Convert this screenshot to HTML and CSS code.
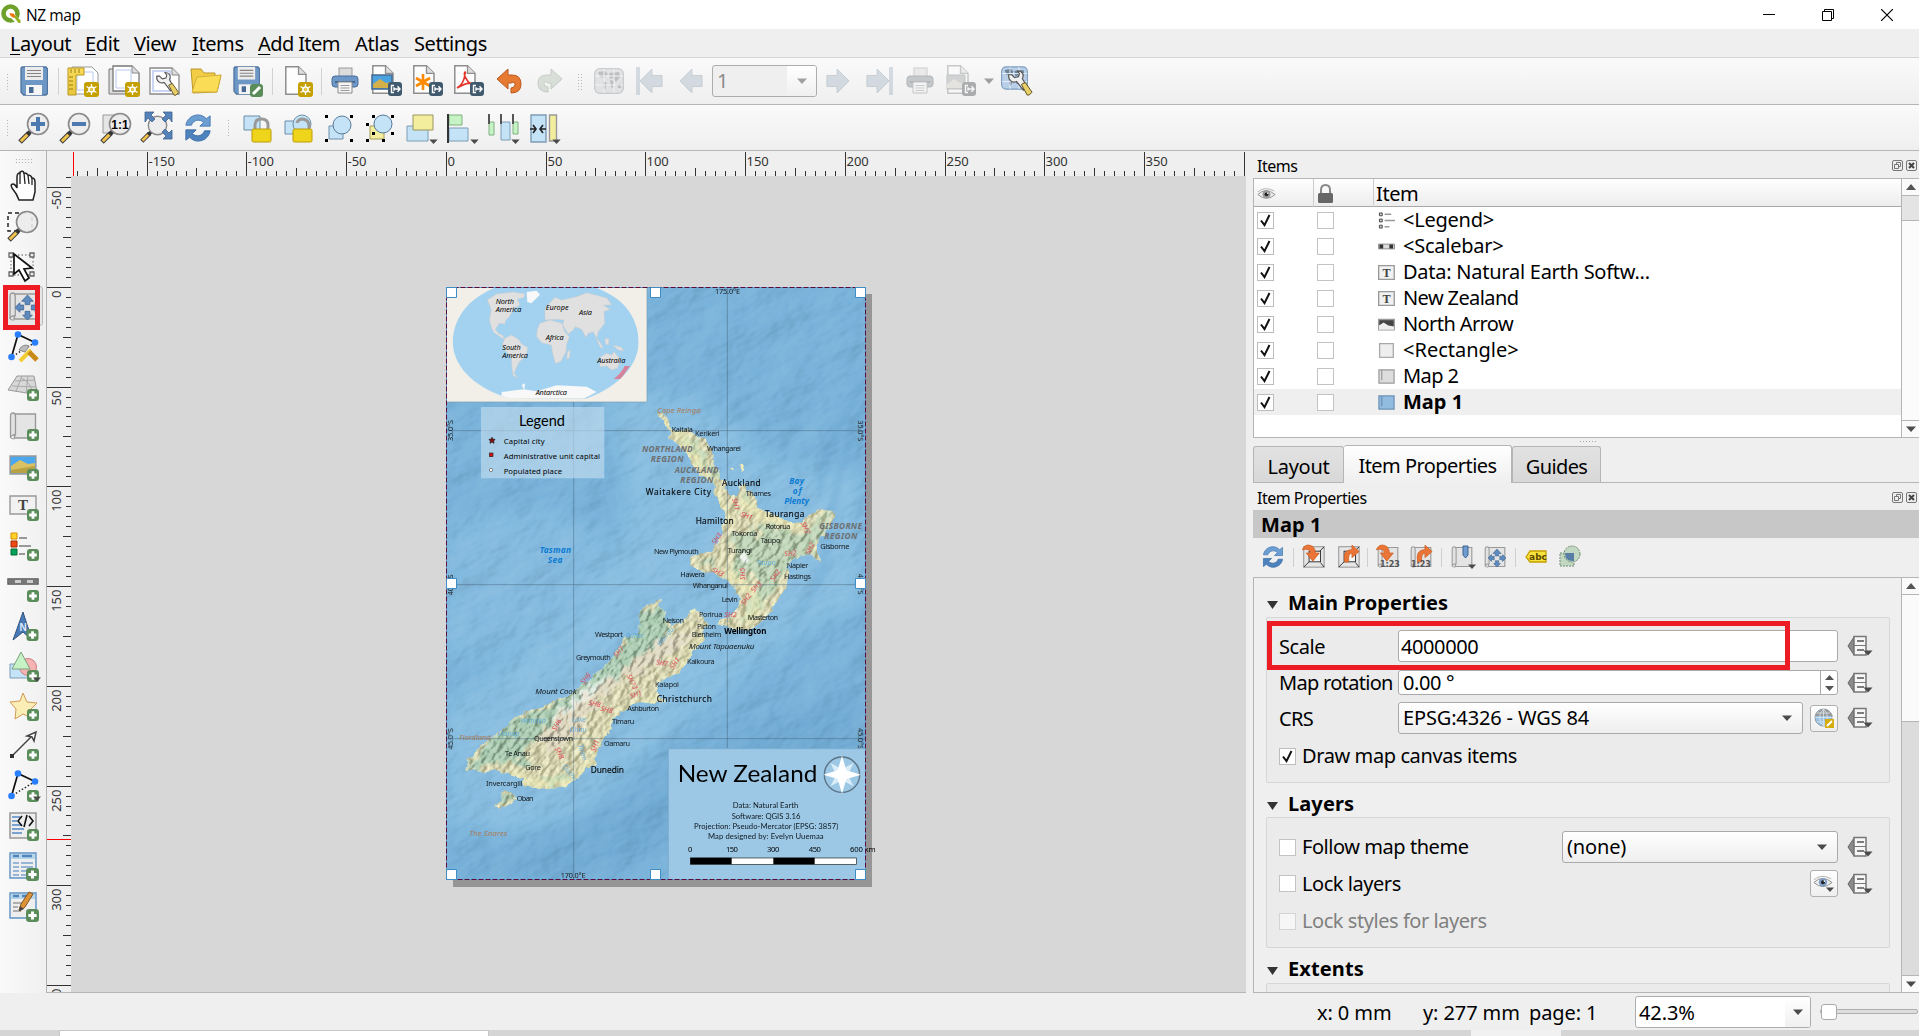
FILE: index.html
```html
<!DOCTYPE html>
<html lang="en">
<head>
<meta charset="utf-8">
<title>NZ map</title>
<link rel="stylesheet" href="styles.css">
</head>
<body>
<svg class="defs" width="0" height="0">
  <defs>
    <linearGradient id="gold" x1="0" y1="0" x2="0" y2="1"><stop offset="0" stop-color="#f9dd5c"/><stop offset="1" stop-color="#e9c53a"/></linearGradient>
    <symbol id="plus" viewBox="0 0 12 12"><rect width="12" height="12" rx="3" fill="#5a8c5a"/><path d="M6 2.200v7.600M2.200 6h7.600" stroke="#fff" stroke-width="2.800"/></symbol>
    <symbol id="new" viewBox="0 0 15 15"><rect width="15" height="15" rx="3" fill="#c4a000"/><path d="M7.500 2v11M2.500 4.500l10 6M2.500 10.500l10-6" stroke="#fff" stroke-width="1.300"/><circle cx="7.500" cy="7.500" r="3.300" fill="#fff"/><circle cx="7.500" cy="7.500" r="1.800" fill="#e2c64a"/></symbol>
    <symbol id="out" viewBox="0 0 14 14"><rect width="14" height="14" rx="3" fill="#415a6e"/><path d="M6 3.500H3.500v7H6M6 7h6M9.500 4.300L12 7 9.500 9.700M6 5.200v3.600" fill="none" stroke="#fff" stroke-width="1.400"/></symbol>
    <symbol id="drop" viewBox="0 0 10 6"><path d="M0 .5h10L5 6z" fill="#4b4b4b"/></symbol>
    <symbol id="doc" viewBox="0 0 22 29"><path d="M.8.8h12.700l7.500 7.500v19.900H.8z" fill="#fdfdfd" stroke="#8e8e8e" stroke-width="1.500"/><path d="M13.500.8v7.500H21" fill="#ddd" stroke="#8e8e8e" stroke-width="1.300"/></symbol>
    <symbol id="floppy" viewBox="0 0 28 30"><path d="M2 1h24l1.500 2v24.500L26 29H3.500L1 26V2z" fill="#6d97c4" stroke="#4f74a0" stroke-width="1.300"/><rect x="5" y="1" width="18" height="13" fill="#ececec"/><path d="M7 4.500h14M7 7.500h14M7 10.500h14" stroke="#858585" stroke-width="1.200"/><rect x="6" y="19" width="16" height="10" fill="#f5f5f5"/><rect x="9" y="21" width="4.500" height="6" fill="#466a93"/></symbol>
    <symbol id="glass" viewBox="0 0 32 32"><path d="M2 30l9-9" stroke="#3e3e3e" stroke-width="5"/><path d="M2.800 29.200l6.500-6.500" stroke="#f2c34a" stroke-width="3"/><path d="M10 22l3-3" stroke="#333" stroke-width="4"/><circle cx="20" cy="12" r="10.500" fill="#ececec" fill-opacity=".9" stroke="#8a8a8a" stroke-width="1.600"/></symbol>
    <symbol id="refresh" viewBox="0 0 30 30"><path d="M2 12C3 5 9 1 15 1c4 0 7 2 9 4l4-3v11H17l4-4c-4-4-11-3-13 3z" fill="#6c9ed2" stroke="#477ab4"/><path d="M28 18c-1 7-7 11-13 11-4 0-7-2-9-4l-4 3V17h11l-4 4c4 4 11 3 13-3z" fill="#4d82bd" stroke="#3a6da8"/></symbol>
    <symbol id="roll" viewBox="0 0 27 28"><path d="M5 2h21v24H5z" fill="#e4e4e4" stroke="#999" stroke-width="1.400"/><path d="M1 4q0-3 2.500-3T6 4v19H3.500Q1 24 1 26z" fill="#e2e2e2" stroke="#999" stroke-width="1.300"/><path d="M1 25q0 2 4 2" stroke="#999" fill="none"/></symbol>
    <symbol id="printer" viewBox="0 0 28 28"><rect x="8" y="1" width="13" height="9" fill="#dcdcdc" stroke="#999"/><rect x="1" y="9" width="26" height="11" rx="3" fill="#6d97c6" stroke="#4a6f9b"/><path d="M4 15h20" stroke="#486a91" stroke-width="2"/><path d="M7 15h14v11H7z" fill="#f6f6f6" stroke="#8a8a8a"/><path d="M9.500 18.500h9M9.500 21h9M9.500 23.500h9" stroke="#999"/></symbol>
    <symbol id="nodes" viewBox="0 0 32 32"><path d="M4.500 27L11 4.500l17 8" fill="none" stroke="#111" stroke-width="1.700"/><path d="M28 12.500L4.500 27" stroke="#222" stroke-width="1.500" stroke-dasharray="1.500 2"/><circle cx="11" cy="4.500" r="3.300" fill="#2a7fff"/><circle cx="28" cy="12.500" r="3.300" fill="#2a7fff"/><circle cx="4.500" cy="27" r="3.300" fill="#2a7fff"/></symbol>
    <symbol id="dd" viewBox="0 0 26 22"><path d="M7 2L1 11l6 9z" fill="#8b8b8b" stroke="#666"/><path d="M7 1.500h12v18.500H7z" fill="#f7f7f7" stroke="#777" stroke-width="1.500"/><path d="M10 6h7M10 15h7" stroke="#555" stroke-width="1.400"/><path d="M7 10.500h12" stroke="#777"/><path d="M16.500 15.500h9l-4.500 5z" fill="#4b4b4b"/></symbol>
    <symbol id="eye" viewBox="0 0 22 18"><path d="M1 6Q9-1 20 5" fill="none" stroke="#aaa"/><path d="M1 9Q10 0 21 9 11 18 1 9z" fill="#eee" stroke="#888"/><circle cx="11" cy="8.800" r="4.600" fill="currentColor"/><circle cx="11" cy="8.800" r="2.200" fill="#222"/><circle cx="12.500" cy="7.500" r=".9" fill="#fff"/></symbol>
    <symbol id="tick" viewBox="0 0 17 17"><rect x=".5" y=".5" width="16" height="16" fill="#fff" stroke="#bdbdbd"/><path d="M4 8.500l3.500 4.700L12.500 3" fill="none" stroke="#111" stroke-width="2"/></symbol>
    <symbol id="box" viewBox="0 0 17 17"><rect x=".5" y=".5" width="16" height="16" fill="#fff" stroke="#c3c3c3"/></symbol>
    <symbol id="float" viewBox="0 0 11 11"><rect x=".5" y=".5" width="10" height="10" rx="1.500" fill="none" stroke="#777"/><path d="M4.500 4V2.500h4v4H7M2.500 4.500h4v4h-4z" fill="none" stroke="#777"/></symbol>
    <symbol id="shut" viewBox="0 0 11 11"><rect x=".5" y=".5" width="10" height="10" rx="1.500" fill="none" stroke="#777"/><path d="M3 3l5 5M8 3L3 8" stroke="#444" stroke-width="2"/></symbol>
    <symbol id="arrow" viewBox="0 0 26 28"><path d="M1 14L14 1v7h11v12H14v7z" fill="#a9bac8" stroke="#8b9aa7"/></symbol>
    <symbol id="world" viewBox="0 0 30 26"><rect x=".7" y=".7" width="28.600" height="24.600" rx="5" fill="#b9cfe8" stroke="#7e9dbf" stroke-width="1.300"/><path d="M4 4l7-1 3 3-4 4-4-1zM9 13l4 2-2 7-2-3zM15 5l10-1 1 5-4 5-3-4-3 1zM16 12l4 1-1 7-2-1zM23 16h4v4h-3z" fill="#6d8297"/><path d="M1 8h28M1 17h28M10 1v24M20 1v24" stroke="#eaf2fa"/></symbol>
    <symbol id="spanner" viewBox="0 0 32 32"><path d="M12 9l3 3 4-1 1-3-2-3c5 0 7 4 5 8l5 9-4 3-7-9c-5 2-9-2-8-7z" fill="#f0f0f0" stroke="#555" stroke-width="1.200" transform="translate(-2)"/><path d="M20 19l4-2 7 10-3 3-2 0z" fill="#e8cf68" stroke="#5b4f24"/></symbol>
    <symbol id="compress" viewBox="0 0 26 26"><path d="M13 0l6 6.500h-3.500V10h-5V6.500H7zM13 26l5-5h-2.500v-4h-5v4H8zM0 13l5-5v2.500h4v5H5V18zM26 13l-5-5v2.500h-4v5h4V18z" fill="#5d8bc0" stroke="#3c628d" stroke-width=".8"/></symbol>
    <symbol id="frame" viewBox="0 0 26 26"><rect x="2" y="2" width="23" height="23" fill="#e6e6e6" stroke="#888"/><rect x="8" y="7" width="13" height="12" fill="#f5f5f5" stroke="#222"/><path d="M25 2l-5 5M25 25l-4-5M2 25l6-6" stroke="#222"/></symbol>
    <symbol id="curve-in" viewBox="0 0 26 22"><path d="M1 7Q5-1 12 2q5 2 5 9h5l-8 10-8-10h5q0-6-10-4z" fill="#ea7536" stroke="#c9581c" stroke-width=".8"/></symbol>
    <symbol id="curve-out" viewBox="0 0 26 22"><path d="M7 21Q4 6 16 5.500V0l9 8-9 7.500V10q-5 0-4 11z" fill="#ea7536" stroke="#c9581c" stroke-width=".8"/></symbol>
  </defs>
</svg>

<div class="window">
  <header class="titlebar">
    <svg class="logo" width="20" height="20" viewBox="0 0 20 20"><circle cx="9.500" cy="9.500" r="7" fill="none" stroke="#6fa02c" stroke-width="4.600"/><path d="M9.500 9.500l3-.5 7 8-1 2h-3.500l-6-6z" fill="#fff"/><path d="M8.500 9l4 .5 2.500 3-2 1.500L9.500 12z" fill="#ee7913"/><path d="M13 13l4.500 6h2v-2.500L15 11.500z" fill="#93b023"/></svg>
    <span class="title">NZ map</span>
    <div class="winbtns">
      <svg width="12" height="12"><path d="M0 5.500h12" stroke="#000"/></svg>
      <svg width="12" height="12"><path d="M.5 2.500h9v9h-9zM2.500 2.500v-2h9v9h-2" fill="none" stroke="#000"/></svg>
      <svg width="12" height="12"><path d="M0 0l12 12M12 0L0 12" stroke="#000" stroke-width="1.200"/></svg>
    </div>
  </header>
  <nav class="menubar"><span class="m1"><u>L</u>ayout</span><span class="m2"><u>E</u>dit</span><span class="m3"><u>V</u>iew</span><span class="m4"><u>I</u>tems</span><span class="m5"><u>A</u>dd Item</span><span class="m6">Atlas</span><span>Settings</span></nav>

  <div class="toolbar tb1">
    <i class="grip"></i>
    <b><svg viewBox="0 0 32 32"><use href="#floppy" x="2" y="1" width="28" height="30"/></svg></b>
    <i class="sep s8"></i>
    <b><svg viewBox="0 0 32 32"><path d="M5 2h20l6 6v21H5z" fill="#fff" stroke="#999"/><path d="M10 7h16v18H10z" fill="none" stroke="#b8c8ef"/><path d="M1 3h16v7H9v20H1z" fill="url(#gold)" stroke="#b8971f"/><path d="M4 4v4M8 4v4M12 4v4M2 12h4M2 16h4M2 20h4M2 24h4" stroke="#9c7e10"/><use href="#new" x="17" y="17" width="15" height="15"/></svg></b>
    <b><svg viewBox="0 0 32 32"><path d="M1 4h24v25H1z" fill="#ddd" stroke="#777"/><path d="M5 1h19l7 7v18H5z" fill="#fff" stroke="#777" stroke-width="1.300"/><path d="M24 1v7h7" fill="#ddd" stroke="#888"/><path d="M8 5h15v18H8z" fill="none" stroke="#b8c8ef"/><use href="#new" x="17" y="17" width="15" height="15"/></svg></b>
    <b><svg viewBox="0 0 32 32"><path d="M1 3h22l7 7v19H1z" fill="#fff" stroke="#888" stroke-width="1.300"/><path d="M23 3v7h7" fill="#ddd" stroke="#888"/><path d="M4 6h17v20H4z" fill="none" stroke="#b8c8ef" stroke-width="1.500"/><use href="#spanner" x="1" y="3" width="30" height="29"/></svg></b>
    <b><svg viewBox="0 0 32 32"><path d="M1 4h10l3 4h11v3l6-.5-4 16.500-24 1z" fill="#f2cd45" stroke="#b8972a"/><path d="M2 27l5-15 24-2-4 17z" fill="#fbdc57" stroke="#d4b13a"/></svg></b>
    <b><svg viewBox="0 0 32 32"><use href="#floppy" x="2" y="1" width="27" height="29"/><rect x="19" y="19" width="13" height="13" rx="3" fill="#5a8c5a"/><path d="M22 29l7-7" stroke="#fff" stroke-width="3"/></svg></b>
    <i class="sep s10"></i>
    <b><svg viewBox="0 0 32 32"><use href="#doc" x="3" y="1" width="22" height="29"/><use href="#new" x="16" y="17" width="15" height="15"/></svg></b>
    <i class="sep s6"></i>
    <b><svg viewBox="0 0 32 32"><use href="#printer" x="1" y="2" width="28" height="28"/></svg></b>
    <b><svg viewBox="0 0 32 32"><use href="#doc" x="1" y="0" width="22" height="29"/><path d="M1 10h20v14H1z" fill="#4aa3e0" stroke="#46698f" stroke-width="1.500"/><path d="M2 19l7-5 6 4 5-1v6H2z" fill="#d3b04a"/><use href="#out" x="17" y="17" width="14" height="14"/></svg></b>
    <b><svg viewBox="0 0 32 32"><use href="#doc" x="1" y="0" width="22" height="29"/><path d="M11 9v16M4 13l14 8M4 21l14-8" stroke="#ff8a00" stroke-width="2.600"/><use href="#out" x="17" y="17" width="14" height="14"/></svg></b>
    <b><svg viewBox="0 0 32 32"><use href="#doc" x="1" y="0" width="22" height="29"/><path d="M4 23q7-4 8-14 1-2 0-2-2 2 2 8 4 6 6 4-4-3-16 4z" fill="none" stroke="#e5342b" stroke-width="1.600"/><use href="#out" x="17" y="17" width="14" height="14"/></svg></b>
    <b><svg viewBox="0 0 32 32"><path d="M3 14L14 4v6h4q9 0 9 9 0 9-10 9v-5q4 0 4-3.500T17 18h-3v6z" fill="#e67a33" stroke="#bd571d"/></svg></b>
    <b class="off"><svg viewBox="0 0 32 32"><path d="M27 14L16 4v6h-4q-9 0-9 8 0 9 10 9v-5q-4 0-4-3.500T13 18h3v6z" fill="#b8c4b8" stroke="#8a978a"/></svg></b>
    <i class="grip g18"></i>
    <b class="off gray"><svg viewBox="0 0 32 32"><use href="#world" x="-1" y="3" width="32" height="26"/></svg></b>
    <b class="off"><svg viewBox="0 0 32 32"><path d="M1 2h4v28H1z" fill="#a9bac8"/><use href="#arrow" x="4" y="2" width="24" height="28"/></svg></b>
    <b class="off"><svg viewBox="0 0 32 32"><use href="#arrow" x="3" y="2" width="24" height="28"/></svg></b>
    <div class="combo page"><span>1</span><em><svg width="10" height="6"><use href="#drop" opacity=".5"/></svg></em></div>
    <b class="off"><svg viewBox="0 0 32 32"><g transform="matrix(-1 0 0 1 32 0)"><use href="#arrow" x="4" y="2" width="24" height="28"/></g></svg></b>
    <b class="off"><svg viewBox="0 0 32 32"><g transform="matrix(-1 0 0 1 32 0)"><path d="M2 2h4v28H2z" fill="#a9bac8"/><use href="#arrow" x="5" y="2" width="24" height="28"/></g></svg></b>
    <b class="off gray"><svg viewBox="0 0 32 32"><use href="#printer" x="2" y="2" width="28" height="28"/></svg></b>
    <b class="off gray"><svg viewBox="0 0 32 32"><use href="#doc" x="2" y="0" width="22" height="29"/><path d="M2 10h18v14H2z" fill="#9ab" stroke="#789"/><path d="M2 19l7-5 6 4 5-1v6H2z" fill="#e3cf9a"/><use href="#out" x="17" y="17" width="14" height="14"/></svg></b>
    <i class="drop14"><svg width="10" height="6"><use href="#drop" opacity=".5"/></svg></i>
    <b><svg viewBox="0 0 32 32"><use href="#world" x="0" y="1" width="27" height="24"/><use href="#spanner" x="0" y="1" width="33" height="31"/></svg></b>
  </div>

  <div class="toolbar tb2">
    <i class="grip"></i>
    <b><svg viewBox="0 0 32 32"><use href="#glass" width="32" height="32"/><path d="M20 5v14M13 12h14" stroke="#4b79b0" stroke-width="4"/></svg></b>
    <b><svg viewBox="0 0 32 32"><use href="#glass" width="32" height="32"/><path d="M13 12h14" stroke="#4b79b0" stroke-width="4"/></svg></b>
    <b><svg viewBox="0 0 32 32"><path d="M3 3h20v18H3z" fill="#e5e5e5" stroke="#999"/><use href="#glass" width="32" height="32"/><text x="20" y="17" class="one">1:1</text></svg></b>
    <b><svg viewBox="0 0 32 32"><use href="#glass" x="-1" y="3" width="28" height="28"/><path d="M4 0h9l-3 3 4 4-3 3-4-4-3 4zM31 0h-9l3 3-4 4 3 3 4-4 3 4zM31 27h-9l3-3-4-4 3-3 4 4 3-3z" fill="#5583b9" stroke="#3c628d" stroke-width=".8"/></svg></b>
    <b><svg viewBox="0 0 32 32"><use href="#refresh" x="2" y="1" width="28" height="30"/></svg></b>
    <i class="grip g19"></i>
    <b><svg viewBox="0 0 32 32"><path d="M2 4h16v14H2z" fill="#c4e3f7" stroke="#6d8ea8"/><path d="M13 18v-5q0-6 6.500-6t6.500 6v5" fill="none" stroke="#999" stroke-width="3"/><rect x="10" y="17" width="19" height="13" rx="1.500" fill="#eed51c" stroke="#b99b07"/></svg></b>
    <b><svg viewBox="0 0 32 32"><path d="M2 9h14v13H2z" fill="#c4e3f7" stroke="#6d8ea8"/><circle cx="19" cy="12" r="9" fill="#c4e3f7" stroke="#6d8ea8"/><path d="M14 11q1-4 6-4 6 1 6 7v4" fill="none" stroke="#999" stroke-width="3"/><rect x="10" y="17" width="19" height="13" rx="1.500" fill="#eed51c" stroke="#b99b07"/></svg></b>
    <b><svg viewBox="0 0 32 32"><path d="M5 14h14v13H5z" fill="#c4e3f7" stroke="#6d8ea8"/><circle cx="18" cy="13" r="9" fill="#c4e3f7" stroke="#56799a"/><path d="M1 3h3v3H1zM26 3h3v3h-3zM1 27h3v3H1zM26 27h3v3h-3z"/></svg></b>
    <b><svg viewBox="0 0 32 32"><path d="M5 14h14v13H5z" fill="#f3ee9e" stroke="#a49c58"/><circle cx="18" cy="12" r="9" fill="#c4e3f7" stroke="#56799a"/><path d="M7 3h3v3H7zM26 3h3v3h-3zM1 11h3v3H1zM1 27h3v3H1zM7 20h3v3H7zM17 27h3v3h-3zM26 20h3v3h-3z"/></svg></b>
    <b><svg viewBox="0 0 32 32"><path d="M1 14h21v15H1z" fill="#c4e3f7" stroke="#7d9cb5"/><path d="M7 3h20v15H7z" fill="#f3ee9e" stroke="#99945e"/><use href="#drop" x="23" y="27" width="9" height="5"/></svg></b>
    <b><svg viewBox="0 0 32 32"><path d="M2 3h13v10H2z" fill="#c5f3c5" stroke="#7fb07f"/><path d="M2 16h19v13H2z" fill="#c4e3f7" stroke="#7d9cb5"/><path d="M1 2v29" stroke="#333" stroke-width="2"/><use href="#drop" x="23" y="27" width="9" height="5"/></svg></b>
    <b><svg viewBox="0 0 32 32"><path d="M1 10h5v13H1zM25 10h5v12h-5z" fill="#c5f3c5" stroke="#7fb07f"/><path d="M13 10h9v18h-9z" fill="#c4e3f7" stroke="#7d9cb5"/><path d="M1 2v10M13 2v10M25 2v10" stroke="#555" stroke-width="2"/><use href="#drop" x="23" y="27" width="9" height="5"/></svg></b>
    <b><svg viewBox="0 0 32 32"><path d="M2 3h15v27H2z" fill="#c4e3f7" stroke="#7d9cb5" stroke-width="1.400"/><path d="M20.500 3h7v26h-7z" fill="#f3ee9e" stroke="#999" stroke-width="1.400"/><path d="M1 17h6M4 13l3 4-3 4M17 17h-6M14 13l-3 4 3 4" stroke="#222" stroke-width="1.600" fill="none"/><use href="#drop" x="23" y="27" width="9" height="5"/></svg></b>
  </div>

  <main class="work">
    <aside class="tools">
      <i class="hgrip"></i>
      <b><svg viewBox="0 0 32 32"><path d="M12 30q-2-6-7-12-2-4 1-4 2 0 4 4V7q0-4 3-4V2q3-2 4 1 3 0 4 2 3 0 4 3 3 0 3 4v10l-2 8z" fill="#fff" stroke="#222" stroke-width="1.500"/><path d="M13 3v11M17 3l1 11M21 5l1 9M25 8v7" stroke="#222" stroke-width="1.300"/></svg></b>
      <b><svg viewBox="0 0 32 32"><path d="M1 3h24v18H1z" fill="none" stroke="#222" stroke-width="1.500" stroke-dasharray="4 3"/><use href="#glass" x="0" y="0" width="32" height="32"/></svg></b>
      <b><svg viewBox="0 0 32 32"><path d="M4 5h22v20H4z" fill="none" stroke="#888" stroke-width="1.300" stroke-dasharray="1.500 2"/><path d="M2 3h4v4H2zM23 3h4v4h-4zM2 22h4v4H2zM23 22h4v4h-4z" fill="#eee" stroke="#666" stroke-width="1.300"/><path d="M7 4v20l5-4 6 11 4-3-5-9 8-1z" fill="#fff" stroke="#111" stroke-width="1.700"/></svg></b>
      <b class="active"><svg viewBox="0 0 32 32"><use href="#roll" x="1" y="2" width="30" height="29"/><use href="#compress" x="8" y="5" width="25" height="25"/></svg></b>
      <b><svg viewBox="0 0 32 32"><use href="#nodes" width="32" height="32"/><path d="M13 31l11-11" stroke="#f2cc35" stroke-width="4"/><path d="M30 30l-8-8" stroke="#c88a17" stroke-width="5"/><path d="M12 20q4-7 10-4l-4 6z" fill="#bbb" stroke="#888"/></svg></b>
      <b><svg viewBox="0 0 32 32"><path d="M10 6l17 0 3 16-4 2-25-4z" fill="#d8d8d8" stroke="#999"/><path d="M8 11l20-1M5 16l24 1M15 6L9 21M21 6l-2 17M14 8q10 4 12 16" fill="none" stroke="#aaa"/><use href="#plus" x="20" y="19" width="12" height="12"/></svg></b>
      <b><svg viewBox="0 0 32 32"><use href="#roll" x="2" y="2" width="28" height="28"/><use href="#plus" x="20" y="19" width="12" height="12"/></svg></b>
      <b><svg viewBox="0 0 32 32"><path d="M3 6h26v18H3z" fill="#4ba8ee" stroke="#999" stroke-width="1.300"/><path d="M4 16l9-6 8 4 7-1v10H4z" fill="#d9c063"/><path d="M4 20l24-4v7H4z" fill="#b9a243"/><use href="#plus" x="20" y="19" width="12" height="12"/></svg></b>
      <b><svg viewBox="0 0 32 32"><path d="M3 6h26v18H3z" fill="#f1f1f1" stroke="#999" stroke-width="1.400"/><text x="16" y="20" class="tee">T</text><use href="#plus" x="20" y="19" width="12" height="12"/></svg></b>
      <b><svg viewBox="0 0 32 32"><path d="M4 3h6v6H4z" fill="#ffd42a" stroke="#d99000"/><path d="M4 11h6v6H4z" fill="#f04a14" stroke="#a62b00"/><path d="M4 19h6v6H4z" fill="#00a35a" stroke="#046b35"/><path d="M12 8h8M12 16h12M12 24h6" stroke="#999" stroke-width="2"/><use href="#plus" x="20" y="19" width="12" height="12"/></svg></b>
      <b><svg viewBox="0 0 32 32"><path d="M1 9h30v5H1z" fill="#ccc" stroke="#555" stroke-width="1.400"/><path d="M2 10h6v3H2zM14 10h6v3h-6zM26 10h4v3h-4z" fill="#777"/><use href="#plus" x="20" y="20" width="12" height="12"/></svg></b>
      <b><svg viewBox="0 0 32 32"><path d="M16 2L6 30l10-8 9 8z" fill="#4a7ab5" stroke="#31547e"/><text x="16" y="21" class="en">N</text><use href="#plus" x="19" y="19" width="13" height="12"/></svg></b>
      <b><svg viewBox="0 0 32 32"><path d="M3 14h20v14H3z" fill="#c4e3f7" stroke="#7d9cb5"/><circle cx="21" cy="17" r="8.500" fill="#f6b3b3" stroke="#c98080"/><path d="M14 2l9 17H5z" fill="#c5f3c5" stroke="#7fa07f"/><use href="#plus" x="20" y="20" width="12" height="12"/><use href="#drop" x="26" y="27" width="8" height="5"/></svg></b>
      <b><svg viewBox="0 0 32 32"><path d="M16 3l4 9 10 1-7 7 2 8-9-4-8 5 1-10-6-7 10-1z" fill="#fbedb6" stroke="#d29a55"/><use href="#plus" x="20" y="19" width="12" height="12"/></svg></b>
      <b><svg viewBox="0 0 32 32"><path d="M4 27L25 6" stroke="#444" stroke-width="1.500"/><path d="M29 2l-2 9-2-4-5-1z" fill="#fff" stroke="#444" stroke-width="1.500"/><path d="M3 24h4v4H3z" fill="#333"/><use href="#plus" x="20" y="19" width="12" height="12"/></svg></b>
      <b><svg viewBox="0 0 32 32"><use href="#nodes" y="-1" width="32" height="32"/><use href="#plus" x="20" y="20" width="12" height="12"/><use href="#drop" x="26" y="26" width="8" height="5"/></svg></b>
      <b><svg viewBox="0 0 32 32"><path d="M3 3h26v25H3z" fill="#eee" stroke="#999" stroke-width="1.600"/><path d="M5 7h8M5 11h5M5 15h10M5 19h12M5 23h10" stroke="#7ba2cf" stroke-width="2"/><path d="M15 6l-4 5 4 5M22 6l4 5-4 5M20 5l-3 12" fill="none" stroke="#111" stroke-width="1.600"/><use href="#plus" x="20" y="19" width="12" height="12"/></svg></b>
      <b><svg viewBox="0 0 32 32"><path d="M3 3h26v25H3z" fill="#eee" stroke="#5f93c5" stroke-width="1.400"/><path d="M4 4h24v5H4z" fill="#b5d6ea"/><path d="M6 6h6M15 6h10" stroke="#5384bb" stroke-width="2.500"/><path d="M6 13h6M14 13h12M6 17h6M14 17h12M6 21h6M14 21h12M6 25h6M14 25h6" stroke="#7ba2cf" stroke-width="1.500"/><use href="#plus" x="19" y="18" width="13" height="13"/></svg></b>
      <b><svg viewBox="0 0 32 32"><path d="M3 3h26v25H3z" fill="#eee" stroke="#5f93c5" stroke-width="1.400"/><path d="M4 4h24v5H4z" fill="#b5d6ea"/><path d="M6 6h6M15 6h10" stroke="#5384bb" stroke-width="2.500"/><path d="M6 13h10M6 17h5M6 21h8" stroke="#999" stroke-width="1.500"/><path d="M12 20l2-6 8-12 4 2-8 13-5 4z" fill="#dd9438" stroke="#86531d"/><path d="M12 21l1-5 4 3z" fill="#444"/><use href="#plus" x="19" y="19" width="13" height="13"/></svg></b>
      <span class="redmark"></span>
    </aside>

    <section class="canvas">
      <svg class="hruler" id="hruler" width="1199" height="24"></svg>
      <svg class="vruler" id="vruler" width="24" height="816"></svg>
      <div class="paperroom">
        <svg class="paper" width="440" height="610" viewBox="444 285 440 610">
          <defs>
            <filter id="seaRelief" x="0" y="0" width="100%" height="100%" color-interpolation-filters="sRGB"><feTurbulence type="fractalNoise" baseFrequency=".006 .01" numOctaves="4" seed="21"/><feDiffuseLighting surfaceScale="13" lighting-color="#fff"><feDistantLight azimuth="225" elevation="31"/></feDiffuseLighting></filter>
            <filter id="landRelief" x="0" y="0" width="100%" height="100%" color-interpolation-filters="sRGB"><feTurbulence type="fractalNoise" baseFrequency=".035 .07" numOctaves="4" seed="3"/><feDiffuseLighting surfaceScale="12" lighting-color="#fff"><feDistantLight azimuth="225" elevation="38"/></feDiffuseLighting></filter>
            <filter id="soft" x="-20%" y="-20%" width="140%" height="140%"><feGaussianBlur stdDeviation="9"/></filter>
            <filter id="hills" x="-20%" y="-20%" width="140%" height="140%"><feTurbulence type="fractalNoise" baseFrequency=".04" numOctaves="3" seed="9" result="n"/><feDisplacementMap in="SourceGraphic" in2="n" scale="60" xChannelSelector="R" yChannelSelector="G" result="d"/><feGaussianBlur in="d" stdDeviation="3"/></filter>
            <filter id="shelf" x="-20%" y="-20%" width="140%" height="140%"><feGaussianBlur stdDeviation="30"/></filter>
            <filter id="rough" x="-5%" y="-5%" width="110%" height="110%" color-interpolation-filters="sRGB"><feTurbulence type="fractalNoise" baseFrequency=".05" numOctaves="3" seed="5" result="n"/><feDisplacementMap in="SourceGraphic" in2="n" scale="18" xChannelSelector="R" yChannelSelector="G"/></filter>
            <path id="north" d="M678 432L700 428 712 450 722 470 737 484 760 480 790 487 802 500 830 506 835 530 852 545 847 570 860 590 872 600 868 620 890 640 882 655 902 675 918 680 930 662 925 648 948 640 948 660 968 665 978 690 985 713 1010 727 1040 737 1075 755 1110 758 1130 745 1150 725 1175 718 1220 728 1202 765 1184 790 1168 810 1160 835 1167 873 1155 862 1140 855 1110 858 1085 870 1070 887 1078 910 1074 925 1066 960 1040 995 1010 1040 985 1065 960 1078 920 1080 895 1072 880 1065 858 1063 875 1050 900 1040 925 1010 930 990 925 970 905 945 880 925 850 910 810 900 780 885 785 862 810 852 840 848 855 830 872 800 877 770 888 745 880 720 870 700 850 660 852 645 835 625 815 615 790 590 770 555 740 520 715 500 722 488 705 460Z"/>
            <path id="south" d="M627 1025L650 1008 685 992 695 996 680 1008 710 1025 705 1050 725 1065 760 1055 785 1030 800 1022 830 1050 835 1065 820 1080 825 1100 800 1135 775 1170 745 1210 700 1230 680 1245 685 1285 712 1295 660 1300 625 1295 590 1320 560 1335 542 1365 540 1390 520 1410 505 1440 495 1470 500 1480 470 1495 445 1520 420 1540 385 1555 330 1555 285 1550 275 1540 280 1525 215 1510 200 1500 165 1510 130 1500 107 1500 107 1480 140 1440 175 1410 220 1375 265 1335 330 1310 375 1295 420 1275 440 1255 480 1225 520 1190 545 1165 565 1135 580 1105 625 1090 630 1060Z"/>
            <path id="stewart" d="M225 1560L250 1570 262 1590 240 1602 205 1613 192 1608 215 1595 208 1585Z"/>
            <clipPath id="page"><rect x="48" y="51" width="1260" height="1778"/></clipPath>
            <clipPath id="globe"><path d="M68 217C70 300 150 360 235 384L468 386C545 360 624 300 626 217 624 130 570 80 498 53L194 53C130 80 70 130 68 217Z"/></clipPath>
            <mask id="land" maskUnits="userSpaceOnUse" x="48" y="400" width="1260" height="1250"><g filter="url(#rough)" fill="#fff"><use href="#north"/><use href="#south"/><use href="#stewart"/></g></mask>
          </defs>
          <rect x="453" y="294" width="419" height="593" fill="#969696"/>
          <g transform="translate(430 270) scale(.33333)">
            <g clip-path="url(#page)">
              <rect x="48" y="51" width="1260" height="1778" fill="#78b2da"/>
              <path d="M520 400Q800 300 1000 560L1300 620V1000L1080 1100 780 1350 450 1640 250 1700 48 1650V1300L500 1000 600 700Z" fill="#8fc3e4" filter="url(#shelf)" opacity=".7"/>
              <path d="M48 780Q400 640 560 860T48 1180Z" fill="#8cc0e3" filter="url(#shelf)" opacity=".6"/>
              <path d="M48 1800L300 1710 600 1560 900 1380 1308 1250V1500L900 1650 500 1829H48Z" fill="#6ba6d0" filter="url(#shelf)" opacity=".5"/>
              <g transform="rotate(-25 678 940)" opacity=".13" style="mix-blend-mode:hard-light"><rect x="-500" y="-300" width="2400" height="2500" filter="url(#seaRelief)"/></g>
              <path d="M1308 330Q1180 520 1170 660M1308 400Q1220 560 1180 900L1090 1080" fill="none" stroke="#5f9cc9" stroke-width="16" opacity=".35" filter="url(#soft)"/>
              <g filter="url(#rough)" fill="#efedba"><use href="#north"/><use href="#south"/><use href="#stewart"/><path d="M925 585l10-5 8 20-8 6zM780 1020l15-8 3 14-14 8zM900 592l6-2 2 6-6 2z"/></g>
              <g mask="url(#land)">
                <g filter="url(#hills)">
                  <path d="M740 490L800 510 850 590 880 640 840 620ZM1000 760L1110 790 1210 720 1150 850 1060 900 1000 1000 930 1060 990 940 960 860ZM900 800L970 780 1000 900 920 930ZM940 650L965 680 975 730 950 700ZM800 870L850 860 860 900Z" fill="#b9d1b0"/>
                  <path d="M630 1020L710 1010 720 1080 640 1180 560 1230 440 1290 300 1420 150 1500 110 1490 230 1360 400 1280 560 1150 600 1090ZM200 1440L280 1420 300 1480 220 1480ZM330 1530L400 1500 430 1530 360 1550ZM210 1570h40v30h-40z" fill="#a6c9ad"/>
                  <path d="M800 1080L700 1180 600 1220 500 1300 440 1400 360 1450 330 1400 430 1300 560 1220 680 1110Z" fill="#ddd6bc"/>
                  <path d="M350 1370L480 1240 580 1190 500 1260 430 1310Z" fill="#fff" opacity=".6"/>
                  <circle cx="945" cy="875" r="12" fill="#fff"/>
                </g>
                <g transform="rotate(-45 500 1000)" opacity=".3" style="mix-blend-mode:hard-light"><rect x="-400" y="-200" width="2100" height="2300" filter="url(#landRelief)"/></g>
                <path d="M700 450L760 500 830 620 870 720 900 760M880 900L960 960 980 1000 950 1060M840 1080L700 1290M680 1285L560 1350 520 1440 440 1530 300 1540 240 1510M1110 765L1000 740 930 690" fill="none" stroke="#f3f0bb" stroke-width="30" opacity=".6" filter="url(#soft)"/>
              </g>
              <path d="M431 396V1829M892 51V1436M48 482H1308M48 944H1308M48 1406H1308" stroke="#3d566a" stroke-opacity=".5" stroke-width="2.500"/>
            </g>
            <rect x="48" y="51" width="603" height="345" fill="#f2efe9"/>
            <g clip-path="url(#globe)">
              <rect x="48" y="51" width="603" height="345" fill="#a3d2f0"/>
              <path d="M172 90L200 72 250 66 285 72 282 82 262 88 270 104 250 118 238 140 226 152 225 162 208 160 196 178 205 190 218 196 225 208 210 200 192 188 185 175 178 150 184 120 178 104ZM224 205L245 195 268 210 274 222 293 232 288 258 268 275 258 295 252 310 262 322 250 318 246 295 244 262 224 240 218 222ZM330 160L360 150 395 160 404 185 418 200 410 222 408 245 392 275 376 280 368 250 364 225 335 218 320 200 322 178ZM412 246l10-6-4 24-8 4zM345 120L360 98 375 82 395 90 440 80 470 68 530 84 545 104 520 106 540 118 522 125 524 160 505 185 500 205 490 185 475 190 468 202 455 178 436 170 430 180 415 192 398 165 402 150 375 148 345 150ZM510 262L530 250 545 256 552 245 572 270 562 295 545 300 530 288 510 290ZM498 205l12 12 10 18-8-2zM525 205l12 2-2 18-8-3zM550 226l25 6 6 12-20-6z" fill="#e0e0e0" stroke="#ccc" stroke-width="1.500"/>
              <path d="M290 66L320 62 330 74 304 100 292 96ZM215 384V366L280 358 320 364 380 346 470 350 500 366 460 386ZM275 345l10-5-2 20z" fill="#f8f8f8"/>
              <path d="M584 288h16L572 327H551Q575 308 584 288z" fill="#d6829a"/>
            </g>
            <path d="M48 396H651V51" fill="none" stroke="#7d9cb1" stroke-width="2"/>
            <g class="it" font-size="22">
              <text x="197" y="102" textLength="55">North</text><text x="197" y="126" textLength="77">America</text><text x="347" y="121" textLength="69">Europe</text><text x="447" y="136" textLength="39">Asia</text><text x="347" y="210" textLength="54">Africa</text><text x="217" y="240" textLength="55">South</text><text x="217" y="264" textLength="77">America</text><text x="502" y="278" textLength="84">Australia</text><text x="317" y="375" textLength="94">Antarctica</text>
            </g>
            <rect x="153" y="411" width="370" height="214" fill="#c5def0" fill-opacity=".62"/>
            <text x="267" y="468" font-size="43" textLength="138" lengthAdjust="spacingAndGlyphs" class="car">Legend</text>
            <g font-size="23"><text x="221" y="521" textLength="123">Capital city</text><text x="221" y="566" textLength="289">Administrative unit capital</text><text x="221" y="611" textLength="175">Populated place</text></g>
            <path d="M186 502l3 6h6l-4 5 1 7-6-4-6 4 1-7-4-5h6z" fill="#8d1010" stroke="#111" stroke-width="2"/><rect x="178" y="549" width="11" height="11" fill="#d11" stroke="#222" stroke-width="2"/><circle cx="183" cy="600" r="5" fill="#fff" stroke="#555" stroke-width="2"/>
            <g class="it" font-size="23" fill="#a87b58"><text x="682" y="430" textLength="130">Cape Reinga</text><text x="88" y="1409" textLength="94">Fiordland</text><text x="118" y="1699" textLength="114">The Snares</text></g>
            <g class="bi" font-size="25" fill="#6e7072"><text x="636" y="545" textLength="152">NORTHLAND</text><text x="662" y="575" textLength="99">REGION</text><text x="734" y="608" textLength="132">AUCKLAND</text><text x="751" y="638" textLength="99">REGION</text><text x="1168" y="776" textLength="128">GISBORNE</text><text x="1183" y="806" textLength="99">REGION</text></g>
            <g class="bi" font-size="25" fill="#0c7bd3"><text x="1078" y="642" textLength="44">Bay</text><text x="1088" y="672" textLength="27">of</text><text x="1063" y="701" textLength="74">Plenty</text><text x="329" y="850" textLength="94">Tasman</text><text x="353" y="880" textLength="44">Sea</text></g>
            <g font-size="21" fill="#dd4a56" text-anchor="middle" class="it"><text transform="translate(911 704) rotate(75)">SH1</text><text transform="translate(948 744) rotate(20)">SH1</text><text transform="translate(1120 776) rotate(65)">SH2</text><text transform="translate(866 810) rotate(-55)">SH3</text><text transform="translate(1082 857) rotate(-5)">SH2</text><text transform="translate(1146 838) rotate(-65)">SH2</text><text transform="translate(860 912) rotate(25)">SH3</text><text transform="translate(944 912) rotate(-90)">SH5</text><text transform="translate(1042 920) rotate(-55)">SH2</text><text transform="translate(984 955) rotate(-50)">SH3</text><text transform="translate(954 992) rotate(-55)">SH2</text><text x="902" y="1042">SH2</text><text transform="translate(572 1150) rotate(-50)">SH7</text><text transform="translate(472 1230) rotate(-50)">SH6</text><text transform="translate(695 1186) rotate(10)">SH7</text><text transform="translate(740 1184) rotate(-55)">SH1</text><text transform="translate(600 1238) rotate(65)">SH73</text><text transform="translate(620 1280) rotate(-20)">SH1</text><text transform="translate(492 1308) rotate(15)">SH8</text><text transform="translate(528 1326) rotate(15)">SH8</text><text transform="translate(386 1368) rotate(-60)">SH6</text><text transform="translate(382 1452) rotate(65)">SH8</text><text transform="translate(502 1430) rotate(-70)">SH1</text></g>
            <g font-size="21" fill="#55a5df" class="it" opacity=".8"><text x="587" y="1103">Buller</text><text transform="translate(690 1130) rotate(-50)">Wairau</text><text x="272" y="1360">Wanaka</text><text x="425" y="1357">Lake</text><text x="418" y="1387">Ohau</text><text transform="translate(445 1425) rotate(75)">Taieri</text><text transform="translate(395 1490) rotate(50)">Clutha</text><text x="202" y="1398">Manap</text><text x="980" y="886">Taupo</text></g>
            <g font-size="22" fill="#14191c">
              <text x="725" y="486" textLength="64">Kaitaia</text><text x="795" y="497" textLength="74">Kerikeri</text><text x="831" y="544" textLength="102">Whangarei</text><text x="947" y="677" textLength="76">Thames</text><text x="1007" y="778" textLength="74">Rotorua</text><text x="905" y="798" textLength="77">Tokoroa</text><text x="992" y="818" textLength="59">Taupo</text><text x="893" y="848" textLength="73">Turangi</text><text x="1171" y="838" textLength="87">Gisborne</text><text x="672" y="851" textLength="134">New Plymouth</text><text x="1070" y="894" textLength="65">Napier</text><text x="751" y="920" textLength="74">Hawera</text><text x="1062" y="928" textLength="81">Hastings</text><text x="788" y="953" textLength="106">Whanganui</text><text x="875" y="995" textLength="48">Levin</text><text x="807" y="1042" textLength="70">Porirua</text><text x="953" y="1049" textLength="91">Masterton</text><text x="698" y="1058" textLength="64">Nelson</text><text x="801" y="1078" textLength="57">Picton</text><text x="785" y="1102" textLength="89">Blenheim</text><text x="495" y="1101" textLength="84">Westport</text><text x="438" y="1169" textLength="104">Greymouth</text><text x="771" y="1181" textLength="83">Kaikoura</text><text x="675" y="1250" textLength="72">Kaiapoi</text><text x="592" y="1322" textLength="95">Ashburton</text><text x="546" y="1363" textLength="67">Timaru</text><text x="312" y="1412" textLength="117">Queenstown</text><text x="522" y="1429" textLength="78">Oamaru</text><text x="225" y="1459" textLength="75">Te Anau</text><text x="286" y="1499" textLength="47">Gore</text><text x="168" y="1549" textLength="110">Invercargill</text><text x="260" y="1593" textLength="51">Oban</text>
            </g>
            <g font-size="25" fill="#0c1013" stroke="#0c1013" stroke-width=".5"><text x="876" y="649" textLength="116">Auckland</text><text x="647" y="676" textLength="196">Waitakere City</text><text x="1005" y="740" textLength="118">Tauranga</text><text x="797" y="762" textLength="114">Hamilton</text><text x="680" y="1295" textLength="166">Christchurch</text><text x="482" y="1509" textLength="100">Dunedin</text></g>
            <text x="883" y="1092" font-size="24" font-weight="700" textLength="126">Wellington</text>
            <g class="it" font-size="24" fill="#14181b"><text x="777" y="1138" textLength="196">Mount Tapuaenuku</text><text x="316" y="1273" textLength="124">Mount Cook</text></g>
            <g font-size="22" fill="#1a1a1a"><text x="855" y="73" textLength="75">175.0°E</text><text x="392" y="1823" textLength="75">170.0°E</text><text transform="translate(70 513) rotate(-90)" textLength="63">35.0°S</text><text transform="translate(70 1438) rotate(-90)" textLength="63">45.0°S</text><text transform="translate(70 976) rotate(-90)" textLength="63">40.0°S</text><text transform="translate(1285 451) rotate(90)" textLength="63">35.0°S</text><text transform="translate(1285 911) rotate(90)" textLength="63">40.0°S</text><text transform="translate(1285 1374) rotate(90)" textLength="63">45.0°S</text></g>
            <rect x="715" y="1436" width="592" height="393" fill="#9cc8e6"/><path d="M715 1829V1436H1307" fill="none" stroke="#7caed0" stroke-width="3"/>
            <text x="743" y="1535" font-size="71" textLength="419" class="car" lengthAdjust="spacingAndGlyphs">New Zealand</text>
            <circle cx="1236" cy="1514" r="53" fill="#9cc8e6" stroke="#5c7384" stroke-width="4"/>
            <path d="M1201 1479l35 18 35-18-18 35 18 35-35-18-35 18 18-35z" fill="#d9ecf8"/><path d="M1236 1457l13 44 44 13-44 13-13 44-13-44-43-13 43-13z" fill="#fff"/>
            <g font-size="23" class="car" fill="#10181f"><text x="908" y="1613" textLength="197">Data: Natural Earth</text><text x="905" y="1646" textLength="206">Software: QGIS 3.16</text><text x="792" y="1676" textLength="433">Projection: Pseudo-Mercator (EPSG: 3857)</text><text x="834" y="1706" textLength="347">Map designed by: Evelyn Uuemaa</text></g>
            <g font-size="23"><text x="774" y="1745">0</text><text x="888" y="1745" textLength="36">150</text><text x="1011" y="1745" textLength="37">300</text><text x="1136" y="1745" textLength="37">450</text><text x="1260" y="1745" textLength="77">600 km</text></g>
            <rect x="781" y="1764" width="498" height="19" fill="#fff" stroke="#222" stroke-width="2"/><path d="M781 1763h124v20H781zM1030 1763h124v20h-124z"/>
          </g>
          <rect x="446.500" y="287.500" width="419" height="592" fill="none" stroke="#5aa7d6"/>
          <rect x="446.500" y="287.500" width="419" height="592" fill="none" stroke="#5b0a3c" stroke-dasharray="5 2"/>
          <g fill="#fff" stroke="#3e8dc4"><path d="M446.500 287.500h10v10h-10zM650.500 287.500h10v10h-10zM855.500 287.500h10v10h-10zM446.500 578.500h10v10h-10zM855.500 578.500h10v10h-10zM446.500 869.500h10v10h-10zM650.500 869.500h10v10h-10zM855.500 869.500h10v10h-10z"/></g>
        </svg>
      </div>
    </section>

    <aside class="panels">
      <div class="docktitle"><span>Items</span><svg width="11" height="11"><use href="#float"/></svg><svg width="11" height="11"><use href="#shut"/></svg></div>
      <div class="items">
        <div class="list">
          <div class="head"><span><svg width="19" height="17" color="#9a9a9a"><use href="#eye"/></svg></span><span><svg width="17" height="20" viewBox="0 0 17 20"><path d="M4 10V6q0-5 4.500-5T13 6v4" fill="none" stroke="#888" stroke-width="2"/><rect x="1" y="9" width="15" height="10" rx="1.500" fill="#666"/></svg></span><span>Item</span></div>
          <div class="row"><svg><use href="#tick"/></svg><svg><use href="#box"/></svg><svg viewBox="0 0 18 18"><path d="M1.500 1h3v3h-3zM1.500 7.500h3v3h-3zM1.500 14h3v3h-3z" fill="#ccc" stroke="#444"/><path d="M7 2.500h7M7 9h11M7 15.500h5" stroke="#999" stroke-width="1.600"/></svg><span>&lt;Legend&gt;</span></div>
          <div class="row"><svg><use href="#tick"/></svg><svg><use href="#box"/></svg><svg viewBox="0 0 18 18"><path d="M.5 6.500h17v5H.5z" fill="#ddd" stroke="#888"/><path d="M1.500 7h4v4h-4zM12 7h4v4h-4z" fill="#333"/></svg><span>&lt;Scalebar&gt;</span></div>
          <div class="row"><svg><use href="#tick"/></svg><svg><use href="#box"/></svg><svg viewBox="0 0 18 18"><path d="M.7 1.700h16.500v14.500H.7z" fill="#f1f1f1" stroke="#999" stroke-width="1.400"/><text x="9" y="13.500" class="tee sm">T</text></svg><span>Data: Natural Earth Softw...</span></div>
          <div class="row tight"><svg><use href="#tick"/></svg><svg><use href="#box"/></svg><svg viewBox="0 0 18 18"><path d="M.7 1.700h16.500v14.500H.7z" fill="#f1f1f1" stroke="#999" stroke-width="1.400"/><text x="9" y="13.500" class="tee sm">T</text></svg><span>New Zealand</span></div>
          <div class="row tight"><svg><use href="#tick"/></svg><svg><use href="#box"/></svg><svg viewBox="0 0 18 18"><path d="M.7 3.700h16.500v11H.7z" fill="#444" stroke="#999" stroke-width="1.400"/><path d="M1 10l5-3 5 3 6 1v3.500H1z" fill="#eee"/></svg><span>North Arrow</span></div>
          <div class="row wide"><svg><use href="#tick"/></svg><svg><use href="#box"/></svg><svg viewBox="0 0 18 18"><path d="M1.700 1.700h14.500v14.500H1.700z" fill="#eee" stroke="#aaa" stroke-width="1.400"/></svg><span>&lt;Rectangle&gt;</span></div>
          <div class="row tight"><svg><use href="#tick"/></svg><svg><use href="#box"/></svg><svg viewBox="0 0 18 18"><path d="M4 2h13v14H1V2h3v11" fill="#ddd" stroke="#999" stroke-width="1.300"/></svg><span>Map 2</span></div>
          <div class="row sel"><svg><use href="#tick"/></svg><svg><use href="#box"/></svg><svg viewBox="0 0 18 18"><path d="M4 2h13v14H1V2h3v11" fill="#92bbe0" stroke="#6b91b5" stroke-width="1.300"/></svg><span>Map 1</span></div>
        </div>
        <div class="scroll sc1"><i><svg width="10" height="6"><path d="M0 6h10L5 0z" fill="#555"/></svg></i><em></em><i><svg width="10" height="6"><use href="#drop"/></svg></i></div>
      </div>
      <div class="splitter"></div>
      <div class="tabs"><span class="t1">Layout</span><span class="t2 on">Item Properties</span><span class="t3">Guides</span></div>
      <div class="docktitle dt2"><span>Item Properties</span><svg width="11" height="11"><use href="#float"/></svg><svg width="11" height="11"><use href="#shut"/></svg></div>
      <h2>Map 1</h2>
      <div class="mini">
        <svg width="350" height="34" viewBox="1245 540 350 34">
          <use href="#refresh" x="1262" y="546" width="22" height="22"/>
          <path d="M1293.500 548v19M1367.500 548v19M1441.500 548v19M1515.500 548v19" stroke="#cfcfcf"/>
          <use href="#frame" x="1302" y="545" width="23" height="23"/><use href="#curve-in" x="1301" y="544" width="22" height="18"/>
          <use href="#frame" x="1337" y="545" width="23" height="23"/><use href="#curve-out" x="1339" y="545" width="21" height="18"/>
          <use href="#roll" x="1377" y="546" width="22" height="22"/><use href="#curve-in" x="1375" y="544" width="22" height="18"/><text x="1380" y="567" class="ratio">1:23</text>
          <use href="#roll" x="1410" y="546" width="22" height="22"/><use href="#curve-out" x="1412" y="545" width="21" height="18"/><text x="1411" y="567" class="ratio">1:23</text>
          <use href="#roll" x="1451" y="546" width="22" height="22"/><path d="M1463 546h5v9l-2.500 3-2.500-3z" fill="#6f9bd0" stroke="#3c628d"/><use href="#drop" x="1468" y="564" width="8" height="5"/>
          <use href="#roll" x="1484" y="546" width="22" height="22"/><use href="#compress" x="1488" y="549" width="18" height="18"/>
          <path d="M1526 557l4-6h16v11h-16z" fill="#f8e23c" stroke="#c4a000" stroke-width="1.300"/><text x="1538" y="560" class="abc">abc</text>
          <path d="M1560 553h14v13h-14z" fill="#c3d8c3" stroke="#6e8a6e" stroke-dasharray="2 1"/><circle cx="1572" cy="554" r="8" fill="#c3d8c3" stroke="#6e8a6e" stroke-dasharray="2 1"/><path d="M1565 553h9v8q-9 1-9-8z" fill="#587ea5"/>
        </svg>
      </div>
      <div class="props">
        <div class="form">
          <h3 class="h-main"><svg width="11" height="8"><path d="M0 0h11L5.500 8z" fill="#333"/></svg>Main Properties</h3>
          <div class="group g1">
            <div class="line l1"><label>Scale</label><div class="field">4000000</div><svg class="dd"><use href="#dd"/></svg></div>
            <div class="line l2"><label>Map rotation</label><div class="field spin">0.00 °<em><svg width="9" height="16"><path d="M0 5h9L4.500 0zM0 11h9l-4.500 5z" fill="#555"/></svg></em></div><svg class="dd"><use href="#dd"/></svg></div>
            <div class="line l3"><label>CRS</label><div class="field drop">EPSG:4326 - WGS 84<svg width="10" height="6"><use href="#drop"/></svg></div><div class="btn"><svg width="20" height="20" viewBox="0 0 20 20"><circle cx="9.500" cy="9.500" r="8.500" fill="#9cc3e6" stroke="#8a97a3"/><path d="M1 8Q5 1 10 1t9 7z" fill="#999"/><path d="M1 9.500h17M9.500 1v17M3 5h13M3 14h13M9.500 1q-8 8 0 17M9.500 1q8 8 0 17" fill="none" stroke="#d9e4ec" stroke-width=".8"/><rect x="11" y="11" width="9" height="9" fill="#d5ad10"/><path d="M13 18l5-5" stroke="#fff" stroke-width="1.800"/></svg></div><svg class="dd"><use href="#dd"/></svg></div>
            <div class="line l4"><svg class="cb"><use href="#tick"/></svg><span>Draw map canvas items</span></div>
            <span class="redbox"></span>
          </div>
          <h3 class="h-lay"><svg width="11" height="8"><path d="M0 0h11L5.500 8z" fill="#333"/></svg>Layers</h3>
          <div class="group g2">
            <div class="line l5"><svg class="cb"><use href="#box"/></svg><span>Follow map theme</span><div class="field drop none">(none)<svg width="10" height="6"><use href="#drop"/></svg></div><svg class="dd"><use href="#dd"/></svg></div>
            <div class="line l6"><svg class="cb"><use href="#box"/></svg><span>Lock layers</span><div class="btn"><svg width="22" height="20" color="#7d9dc6"><use href="#eye" width="20" height="17"/><use href="#drop" x="13" y="13" width="8" height="5"/></svg></div><svg class="dd"><use href="#dd"/></svg></div>
            <div class="line l7"><svg class="cb faint"><use href="#box"/></svg><span>Lock styles for layers</span></div>
          </div>
          <h3 class="h-ext"><svg width="11" height="8"><path d="M0 0h11L5.500 8z" fill="#333"/></svg>Extents</h3>
          <div class="group g3"></div>
        </div>
        <div class="scroll sc2"><i><svg width="10" height="6"><path d="M0 6h10L5 0z" fill="#555"/></svg></i><em></em><i><svg width="10" height="6"><use href="#drop"/></svg></i></div>
      </div>
    </aside>
  </main>

  <footer class="status"><span class="c1">x: 0 mm</span><span class="c2">y: 277 mm</span><span class="c3">page: 1</span><div class="combo zoom"><span>42.3%</span><em><svg width="10" height="6"><use href="#drop"/></svg></em></div><div class="slider"><i></i></div></footer>
  <div class="desk"><i></i><em></em></div>
</div>
<script src="rulers.js"></script>
</body>
</html>
```
FILE: styles.css
```css
* { box-sizing: border-box; }
body { margin: 0; width: 1919px; height: 1036px; overflow: hidden; background: #efefef; font: 20px/26px "Noto Sans", "Open Sans", sans-serif; color: #000; }
.defs { position: absolute; }
.window { display: flex; flex-direction: column; height: 1036px; white-space: nowrap; }
.window svg { flex: none; }
i, em, b { font-style: normal; font-weight: 400; }

.titlebar { display: flex; align-items: center; height: 29px; padding-left: 1px; background: #fff; font: 15.500px/28px "Open Sans", sans-serif; }
.title { margin-left: 5px; letter-spacing: -.4px; }
.logo { margin-top: -1px; }
.winbtns { display: flex; gap: 47px; margin: 0 26px 0 auto; }

.menubar { display: flex; height: 29px; align-items: center; padding: 2px 0 0 10px; background: #efefef; border-bottom: 1px solid #d4d4d4; letter-spacing: -.4px; }
.menubar u { text-underline-offset: 3px; text-decoration-thickness: 1px; }
.m1 { width: 75px; } .m2 { width: 49px; } .m3 { width: 58px; } .m4 { width: 66px; } .m5 { width: 97px; } .m6 { width: 59px; }
.menubar .m5 { letter-spacing: -.6px; }

.toolbar { display: flex; align-items: center; background: linear-gradient(#fafafa, #efefef); border-bottom: 1px solid #b5b5b5; }
.tb1 { height: 47px; }
.tb2 { height: 46px; }
.toolbar b { display: flex; flex: none; width: 41px; justify-content: center; }
.toolbar b > svg { width: 32px; height: 32px; overflow: visible; }
.off { opacity: .45; }
.gray { filter: grayscale(.85); }
.grip { width: 13px; height: 17px; background: radial-gradient(circle, #b5b5b5 .7px, transparent 1px) 0 0 / 3px 3px; background-clip: content-box; padding: 0 4px 0 5px; flex: none; }
.g18 { width: 18px; padding: 0 7px; }
.g19 { width: 19px; padding: 0 6px 0 9px; }
.sep { height: 27px; flex: none; background: linear-gradient(#d2d2d2, #d2d2d2) center / 1px 100% no-repeat; }
.s8 { width: 8px; } .s10 { width: 10px; } .s6 { width: 7px; }
.combo { display: flex; align-items: center; height: 32px; border: 1px solid #adadad; border-radius: 3px; overflow: hidden; }
.combo em { display: flex; align-items: center; justify-content: center; margin-left: auto; height: 100%; width: 29px; background: linear-gradient(#fff, #f0f0f0); }
.page { width: 105px; padding-left: 4px; color: #8a8a8a; background: #efefef; }
.drop14 { width: 15px; display: flex; justify-content: center; }
.one { font: 700 12px "Liberation Sans", sans-serif; text-anchor: middle; }
.tee { font: 700 15px "Liberation Serif", serif; text-anchor: middle; fill: #444; }
.tee.sm { font-size: 13px; }
.en { font: 700 10px "Liberation Sans", sans-serif; text-anchor: middle; fill: #dfe9f5; }

.work { display: flex; height: 842px; flex: none; }
.tools { position: relative; width: 47px; flex: none; display: flex; flex-direction: column; align-items: center; background: linear-gradient(90deg, #fafafa, #f0f0f0); border-right: 1px solid #b2b2b2; padding: 7px 0 0 0; }
.hgrip { width: 18px; height: 6px; margin: 0 0 2px 2px; background: radial-gradient(circle, #b5b5b5 .7px, transparent 1px) 0 0 / 3px 3px; }
.tools b { display: flex; width: 46px; height: 40px; align-items: center; justify-content: center; flex: none; padding-left: 0; }
.tools b > svg { width: 32px; height: 32px; overflow: visible; }
.tools .active { width: 40px; border: 1px solid #bbb; border-radius: 3px; background: #e6e6e6; }
.redmark { position: absolute; left: 3px; top: 134px; width: 37px; height: 45px; border: 5px solid #ed1c24; }

.canvas { width: 1199px; flex: none; display: grid; grid-template: 25px 816px / 24px 1175px; background: #efefef; border-bottom: 1px solid #b5b5b5; overflow: hidden; }
.hruler { grid-area: 1 / 1 / 2 / 3; margin-top: 1px; }
.vruler { grid-area: 2 / 1; }
.hruler text, .vruler text { font: 13px "Noto Sans", sans-serif; fill: #333; }
.paperroom { grid-area: 2 / 2; background: #d7d7d7; padding: 109px 0 0 373px; }
.paper text { font-family: "Noto Sans", sans-serif; }
.paper .it text { font-style: italic; }
.paper .bi text { font-style: italic; font-weight: 700; }
.paper text.car, .paper .car text { font-family: "Lato", "Open Sans", sans-serif; }

.panels { flex: 1; min-width: 0; padding-left: 7px; display: flex; flex-direction: column; letter-spacing: -.4px; }
.docktitle { display: flex; align-items: center; gap: 3px; height: 27px; padding: 2px 2px 0 4px; font-size: 16px; flex: none; }
.docktitle span { margin-right: auto; letter-spacing: -.5px; }
.items { display: flex; height: 260px; border: 1px solid #b5b5b5; border-right: 0; background: #fff; flex: none; }
.list { flex: 1; }
.head { display: grid; grid-template-columns: 60px 60px 1fr; height: 28px; background: linear-gradient(#fff, #ededed); border-bottom: 1px solid #a8a8a8; align-items: stretch; }
.head span { display: flex; align-items: center; padding-left: 3px; border-right: 1px solid #ccc; padding-top: 2px; }
.head span:last-child { border: 0; padding-left: 2px; }
.row { display: grid; grid-template-columns: 60px 61px 26px 1fr; height: 26px; align-items: center; padding-left: 3px; }
.row svg { width: 17px; height: 17px; }
.row span { letter-spacing: -.25px; margin-left: -1px; }
.row.tight span { letter-spacing: -.6px; }
.row.wide span { letter-spacing: 0; }
.sel { background: #efefef; font-weight: 700; }
.row.sel span { letter-spacing: 0; }
.scroll { width: 18px; display: flex; flex-direction: column; border-left: 1px solid #b5b5b5; flex: none; }
.scroll i { height: 16px; display: flex; align-items: center; justify-content: center; background: #fafafa; }
.scroll em { flex: 1; border: solid #b5b5b5; border-width: 1px 0; }
.sc1 em { background: linear-gradient(#e4e4e4 24px, #b5b5b5 24px, #b5b5b5 25px, #fbfbfb 25px); }
.sc2 em { background: linear-gradient(#fafafa 126px, #b5b5b5 126px, #b5b5b5 127px, #dcdcdc 127px); }
.splitter { width: 17px; height: 7px; margin: 0 0 0 326px; background: radial-gradient(circle, #aaa .7px, transparent 1px) 0 0 / 3px 7px; flex: none; }
.tabs { display: flex; height: 38px; align-items: flex-end; border-bottom: 1px solid #b5b5b5; flex: none; }
.tabs span { height: 36px; line-height: 40px; text-align: center; border: 1px solid #b5b5b5; border-bottom: 0; background: linear-gradient(#e2e2e2, #d8d8d8); border-radius: 3px 3px 0 0; }
.tabs .t1 { width: 91px; letter-spacing: -.3px; } .tabs .t3 { width: 89px; letter-spacing: -.6px; }
.tabs .t2 { width: 168px; height: 38px; background: linear-gradient(#fff, #efefef); margin-bottom: -1px; border-left: 0; letter-spacing: -.55px; }
.dt2 { height: 27px; padding-top: 2px; }
h2 { margin: 0; height: 28px; background: #c7c7c7; font-size: 20px; line-height: 29px; padding-left: 8px; flex: none; letter-spacing: 0.1px; }
.mini { height: 39px; padding: 2px 0 0; margin-left: -8px; flex: none; }
.ratio { font: 700 8px "DejaVu Sans", sans-serif; fill: #555; letter-spacing: 0; }
.abc { font: 700 9px "DejaVu Sans", sans-serif; text-anchor: middle; fill: #5c4a00; letter-spacing: 0; }

.props { display: flex; flex: 1; min-height: 0; border: 1px solid #b5b5b5; border-right: 0; overflow: hidden; }
.form { flex: 1; padding: 0 11px 0 12px; overflow: hidden; }
h3 { margin: 0; font-size: 20px; line-height: 26px; padding-left: 1px; letter-spacing: .1px; }
h3 svg { margin-right: 10px; vertical-align: 1px; }
.h-main { padding-top: 12px; }
.h-lay { padding-top: 8px; }
.h-ext { padding-top: 8px; }
.group { position: relative; border: 1px solid #d6d6d6; border-radius: 2px; background: #ebebeb; }
.g1 { height: 166px; margin-top: 1px; padding: 12px 0 0 12px; }
.g2 { height: 131px; margin-top: 0; padding: 13px 0 0 12px; }
.g3 { height: 60px; margin-top: 1px; }
.line { display: flex; align-items: center; height: 32px; padding-right: 16px; }
.line label { width: 119px; }
.line .field { height: 100%; flex: 1; background: #fff; border: 1px solid #aaa; border-radius: 3px; padding-left: 2px; display: flex; align-items: center; }
.line .dd { width: 26px; height: 22px; margin-left: 9px; }
.line .spin { padding-left: 4px; }
.spin em { margin-left: auto; width: 17px; height: 100%; border-left: 1px solid #aaa; display: flex; align-items: center; justify-content: center; }
.line .drop { background: linear-gradient(#fff, #eee); padding: 0 10px 0 4px; letter-spacing: -.15px; }
.drop svg { margin-left: auto; }
.l1 label, .l1 .field { padding-top: 2px; }
.l2 { height: 25px; margin-top: 8px; }
.l2 label { letter-spacing: -.7px; }
.l3 { margin-top: 7px; }
.l3 label { padding-top: 2px; letter-spacing: -.7px; }
.l4 { height: 26px; margin-top: 9px; }
.btn { width: 28px; height: 27px; margin-left: 7px; border: 1px solid #b0b0b0; border-radius: 3px; background: linear-gradient(#fff, #eee); display: flex; align-items: center; justify-content: center; }
.cb { width: 17px; height: 17px; margin-right: 6px; }
.faint { opacity: .55; }
.line .none { flex: none; width: 276px; margin-left: auto; }
.l5 { padding-top: 0; }
.l6 { height: 27px; margin-top: 7px; }
.l6 .btn { margin-left: auto; }
.l7 { height: 26px; margin-top: 11px; color: #808080; }
.l5 span, .l6 span, .l7 span { letter-spacing: -.45px; }
.redbox { position: absolute; left: 0; top: 3px; width: 523px; height: 49px; border: 5px solid #ed1c24; }

.status { display: flex; height: 37px; flex: none; padding: 2px 0 2px 1317px; align-items: center; }
.c1 { width: 106px; } .c2 { width: 106px; } .c3 { width: 106px; }
.status span { letter-spacing: -.1px; padding-top: 2px; }
.zoom { width: 176px; background: #fff; padding-left: 3px; }
.zoom em { width: 25px; }
.slider { width: 98px; height: 5px; margin-left: 9px; border: 1px solid #b0b0b0; border-radius: 2px; background: #ddd; display: flex; align-items: center; }
.slider i { width: 16px; height: 16px; border: 1px solid #aaa; border-radius: 3px; background: #fff; flex: none; }
.desk { height: 6px; background: #d5d5d5; display: flex; justify-content: space-between; padding: 0 358px 0 59px; }
.desk i { width: 430px; background: #fff; border: 1px solid #c6c6c6; border-bottom: 0; }
.desk em { width: 90px; background: #f1f1f1; }
```
FILE: rulers.js
```js
(function () {
  var NS = 'http://www.w3.org/2000/svg';
  function line(svg, x1, y1, x2, y2, color) {
    var l = document.createElementNS(NS, 'path');
    l.setAttribute('d', 'M' + x1 + ' ' + y1 + 'L' + x2 + ' ' + y2);
    l.setAttribute('stroke', color || '#333');
    svg.appendChild(l);
  }
  function label(svg, text, transform, anchor) {
    var t = document.createElementNS(NS, 'text');
    t.textContent = text;
    t.setAttribute('transform', transform);
    t.setAttribute('text-anchor', anchor);
    svg.appendChild(t);
  }
  var h = document.getElementById('hruler');
  var v = document.getElementById('vruler');
  var mm, p, size;
  for (mm = -185; mm <= 400; mm += 5) {
    p = Math.floor(399.3 + mm * 1.995) + 0.5;
    if (p < 27) continue;
    size = mm % 50 === 0 ? 24 : mm % 25 === 0 ? 8 : 5;
    line(h, p, 24 - size, p, 24);
    if (mm % 50 === 0 && mm < 400) label(h, mm, 'translate(' + (p + 1) + ' 14)', 'start');
  }
  line(h, 26.5, 0, 26.5, 24, '#f00');
  for (mm = -55; mm <= 350; mm += 5) {
    p = Math.floor(111.3 + mm * 1.995) + 0.5;
    size = mm % 50 === 0 ? 24 : mm % 25 === 0 ? 8 : 5;
    line(v, 24 - size, p, 24, p);
    if (mm % 50 === 0) label(v, mm, 'translate(14 ' + (p + 3) + ') rotate(-90)', 'end');
  }
  line(v, 0, 663.5, 24, 663.5, '#f00');
})();
```
